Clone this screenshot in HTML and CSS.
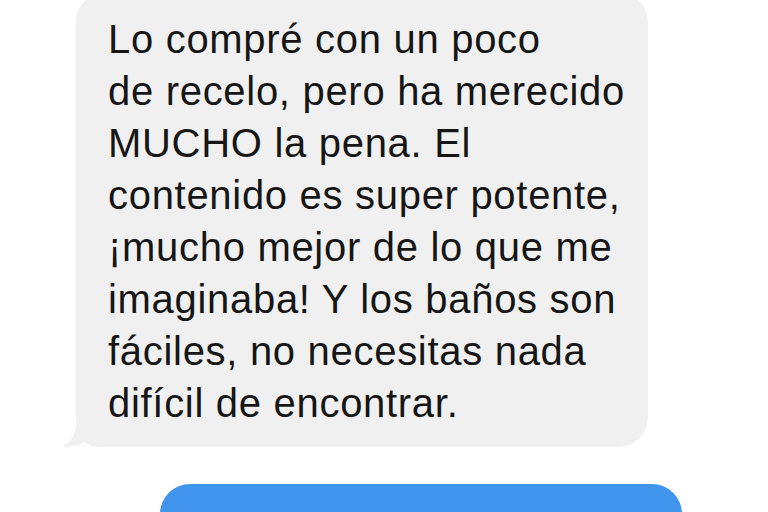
FILE: index.html
```
<!DOCTYPE html>
<html lang="es">
<head>
<meta charset="UTF-8">
<meta name="viewport" content="width=device-width, initial-scale=1.0">
<title>Mensajes</title>
<link rel="stylesheet" href="styles.css">
</head>
<body>
<div class="thread">
  <div class="bubble received">
    <p class="message">
      <span class="line">Lo compré con un poco</span>
      <span class="line">de recelo, pero ha merecido</span>
      <span class="line">MUCHO la pena. El</span>
      <span class="line">contenido es super potente,</span>
      <span class="line">¡mucho mejor de lo que me</span>
      <span class="line">imaginaba! Y los baños son</span>
      <span class="line">fáciles, no necesitas nada</span>
      <span class="line">difícil de encontrar.</span>
    </p>
    <svg class="tail" width="44" height="24" viewBox="0 0 44 24">
      <path d="M14 0 C14 11 9 19 1 24 C8 24 16 23 22 19 C26 22 31 24 40 24 L44 24 L44 0 Z" fill="#f0f0f0"/>
    </svg>
  </div>
  <div class="bubble sent"></div>
</div>
</body>
</html>
```

FILE: styles.css
```
* {
  box-sizing: border-box;
}

html, body {
  margin: 0;
  padding: 0;
  background-color: #ffffff;
  overflow: hidden;
  height: 100%;
}

.thread {
  display: flex;
  flex-direction: column;
  font-family: "Liberation Sans", Arial, sans-serif;
}

.bubble {
  position: relative;
  border-radius: 30px;
}

.received {
  margin-top: -8px;
  margin-left: 76px;
  width: 572px;
  padding: 21px 10px 18px 32px;
  background-color: #f0f0f0;
}

.message {
  margin: 0;
  font-size: 40px;
  line-height: 52px;
  letter-spacing: 0.7px;
  color: #161616;
}

.line {
  display: block;
  white-space: nowrap;
}

.tail {
  position: absolute;
  left: -14px;
  bottom: 0;
}

.sent {
  margin-top: 37px;
  margin-left: 160px;
  width: 522px;
  height: 90px;
  background-color: #4195ed;
}
```
